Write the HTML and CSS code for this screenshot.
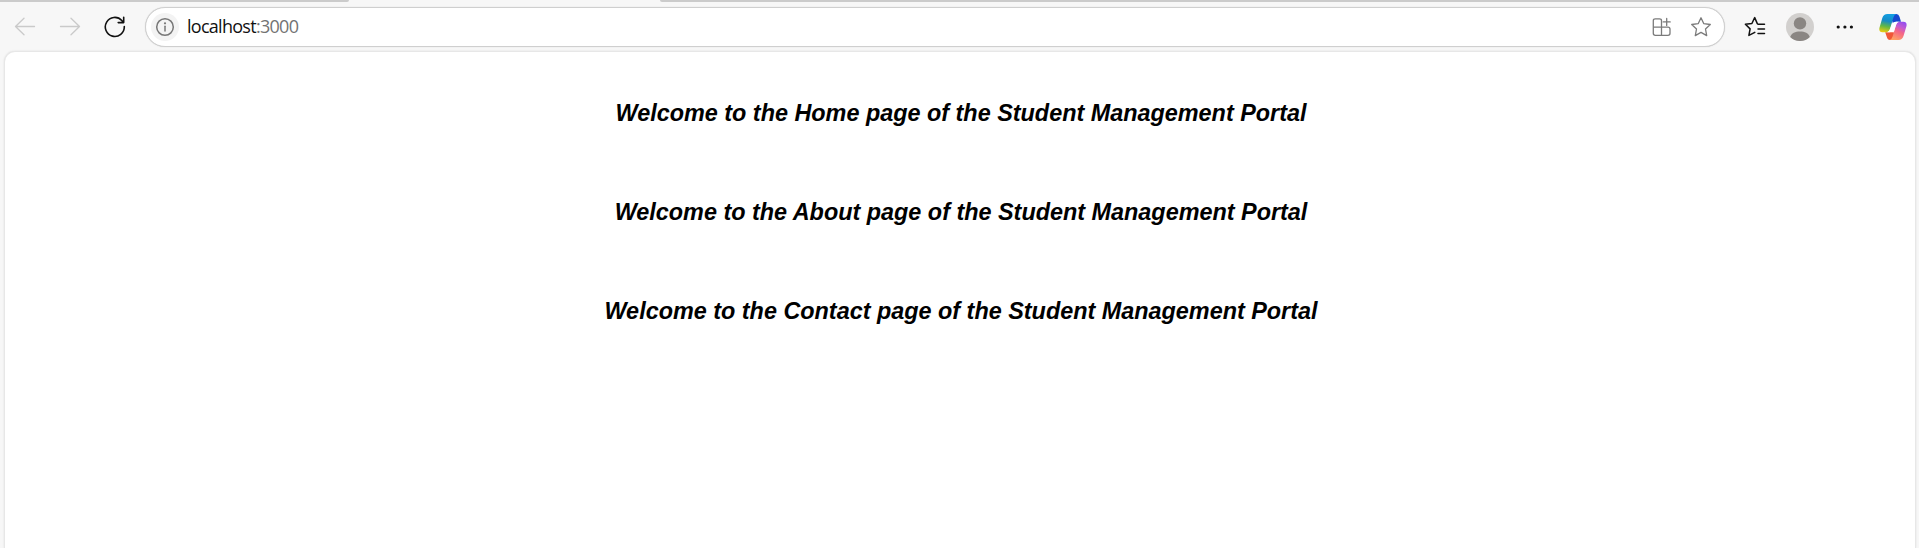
FILE: index.html
```html
<!DOCTYPE html>
<html lang="en">
<head>
<meta charset="utf-8">
<title>Student Management Portal</title>
<link rel="stylesheet" href="styles.css">
</head>
<body>
<div class="tab-edge"><span class="edge-left"></span><span class="edge-right"></span></div>
<header class="toolbar">
  <nav class="nav">
    <svg class="arrow" width="22" height="22" viewBox="0 0 22 22"><path d="M10 2.2 1.5 10.5 10 18.8M1.5 10.5H20.5"/></svg>
    <svg class="arrow" width="22" height="22" viewBox="0 0 22 22"><path d="M12 2.2 20.5 10.5 12 18.8M20.5 10.5H1.5"/></svg>
    <svg class="reload" width="22" height="22" viewBox="0 0 22 22"><path d="M20.3 10.6A9.5 9.5 0 1 1 17.8 4.5L19.4 6.4M19.7 1.2V6.6H14.2"/></svg>
  </nav>
  <div class="address">
    <span class="info"><svg width="20" height="20" viewBox="0 0 20 20"><circle cx="10" cy="10" r="8.3"/><path d="M10 9.2V14"/><circle class="dot" cx="10" cy="6.3" r="1.1"/></svg></span>
    <span class="url">localhost<span class="port">:3000</span></span>
    <svg class="field-icon apps" width="20" height="20" viewBox="0 0 20 20"><path d="M9.5 18.3V3.8Q9.5 1.8 7.5 1.8H3.3Q1.3 1.8 1.3 3.8V16.3Q1.3 18.3 3.3 18.3H16Q18 18.3 18 16.3V12.2Q18 10.2 16 10.2H1.3M14.7 1.4V8.4M11.2 4.9H18.2"/></svg>
    <svg class="field-icon" width="22" height="22" viewBox="0 0 22 22"><path d="M11 1.8 13.7 7.6 20.3 8.5 15.5 13 16.7 19.6 11 16.4 5.3 19.6 6.5 13 1.7 8.5 8.3 7.6Z"/></svg>
  </div>
  <div class="actions">
    <svg class="favorites" width="22" height="22" viewBox="0 0 22 22"><path d="M14 8.2H20.5M14 13H20.5M14 17.6H20.5M13.3 7.6 10.7 1.6 7.9 7.5 1.4 8.3 6.1 12.9 4.9 19.4 10.8 16.3"/></svg>
    <svg class="avatar" width="28" height="28" viewBox="0 0 28 28"><circle cx="14" cy="14" r="14" fill="#d2d0ce"/><circle cx="14" cy="10.4" r="6.2" fill="#8a8683"/><path d="M4.2 24C5.4 20 9.2 18.4 14 18.4S22.6 20 23.8 24A14 14 0 0 1 4.2 24Z" fill="#8a8683"/></svg>
    <svg class="more" width="18" height="6" viewBox="0 0 18 6"><circle cx="2.2" cy="3" r="1.6"/><circle cx="8.9" cy="3" r="1.6"/><circle cx="15.4" cy="3" r="1.6"/></svg>
    <svg class="copilot" width="28" height="26" viewBox="0 0 28 26">
      <defs>
        <linearGradient id="cool" x1=".6" y1="0" x2=".4" y2="1"><stop offset="0" stop-color="#139fe3"/><stop offset=".4" stop-color="#168bc6"/><stop offset=".7" stop-color="#62b844"/><stop offset="1" stop-color="#e5ca12"/></linearGradient>
        <linearGradient id="warm" x1=".8" y1="0" x2=".35" y2="1"><stop offset="0" stop-color="#914cf0"/><stop offset=".3" stop-color="#c45ad0"/><stop offset=".55" stop-color="#f46688"/><stop offset="1" stop-color="#ffa263"/></linearGradient>
      </defs>
      <path d="M13 0H17.5Q19.7 0 20.5 2.8L22 7.8H17Q15 7.8 14.2 10L12 4Z" fill="#1749cf"/>
      <path d="M15 26H11Q8.6 26 7.8 23L6.2 18.2H10.5Q12.8 18.2 13.6 16L16 21Z" fill="#f05737"/>
      <path d="M8.5 0H17.5Q15.3 .5 14.4 3.4L11 15Q10 18.3 7 18.3H3.5Q-.3 18.3 .4 14L3.3 4Q4.5 0 8.5 0Z" fill="url(#cool)"/>
      <path d="M19.3 26H10.5Q12.8 25.5 13.6 22.6L17 11Q18 7.7 21 7.7H24.4Q28.2 7.7 27.5 12L24.5 22Q23.3 26 19.3 26Z" fill="url(#warm)"/>
      <path d="M17.2 7.8H20Q17.8 8.4 17 11L14.6 18.3H8Q10.2 17.6 11 15L13 10Q14 7.8 17.2 7.8Z" fill="#fff"/>
    </svg>
  </div>
</header>
<main class="page">
  <h3 class="welcome">Welcome to the Home page of the Student Management Portal</h3>
  <h3 class="welcome">Welcome to the About page of the Student Management Portal</h3>
  <h3 class="welcome">Welcome to the Contact page of the Student Management Portal</h3>
</main>
</body>
</html>
```
FILE: styles.css
```css
* { box-sizing: border-box; }
body { margin: 0; height: 548px; overflow: hidden; background: #f7f7f7; display: flex; flex-direction: column; font-family: "Liberation Sans", Arial, sans-serif; }
svg { display: block; flex: none; fill: none; stroke-linecap: round; stroke-linejoin: round; }
.tab-edge { height: 2px; display: flex; justify-content: space-between; flex: none; }
.tab-edge span { background: #cbcbcb; }
.edge-left { width: 349px; border-bottom-right-radius: 3px; }
.edge-right { width: 1259px; border-bottom-left-radius: 3px; }
.toolbar { height: 49px; flex: none; display: flex; align-items: flex-start; padding: 5px 11px 0 14px; }
.nav { width: 131px; display: flex; gap: 23px; padding-top: 9px; }
.arrow { stroke: #cacaca; stroke-width: 1.3; }
.reload { stroke: #111; stroke-width: 1.6; }
.address { width: 1580px; height: 40px; border: 1px solid #cfcfcf; border-radius: 20px; background: #fff; display: flex; align-items: center; padding: 0 12px 0 5px; box-shadow: 0 0 1px #ccc; }
.info { width: 28px; height: 28px; border-radius: 50%; background: #f3f3f3; display: grid; place-items: center; }
.info svg { stroke: #777; stroke-width: 1.5; }
.info .dot { fill: #777; stroke: none; }
.url { margin-left: 8px; padding-bottom: 2px; flex: 1; font: 18px/24px "Open Sans", "Noto Sans", sans-serif; letter-spacing: -0.72px; color: #111; }
.port { color: #737373; }
.field-icon { stroke: #7b7b7b; stroke-width: 1.3; }
.apps { margin-right: 18px; }
.actions { flex: 1; display: flex; align-items: center; height: 40px; }
.favorites { margin-left: 19px; stroke: #111; stroke-width: 1.5; }
.avatar { margin-left: 20px; }
.more { margin-left: 22px; fill: #111; }
.copilot { margin-left: 25px; }
.page { flex: 1; margin: 0 3px 0 4px; border: 1px solid #e7e7e7; border-bottom: 0; border-radius: 11px 11px 0 0; background: #fff; padding: 47px 0 0 2px; display: flex; flex-direction: column; gap: 71px; box-shadow: 0 0 2px #ddd; }
.welcome { margin: 0; text-align: center; font-size: 23.4px; line-height: 28px; font-style: italic; font-weight: 700; color: #000; }
```
